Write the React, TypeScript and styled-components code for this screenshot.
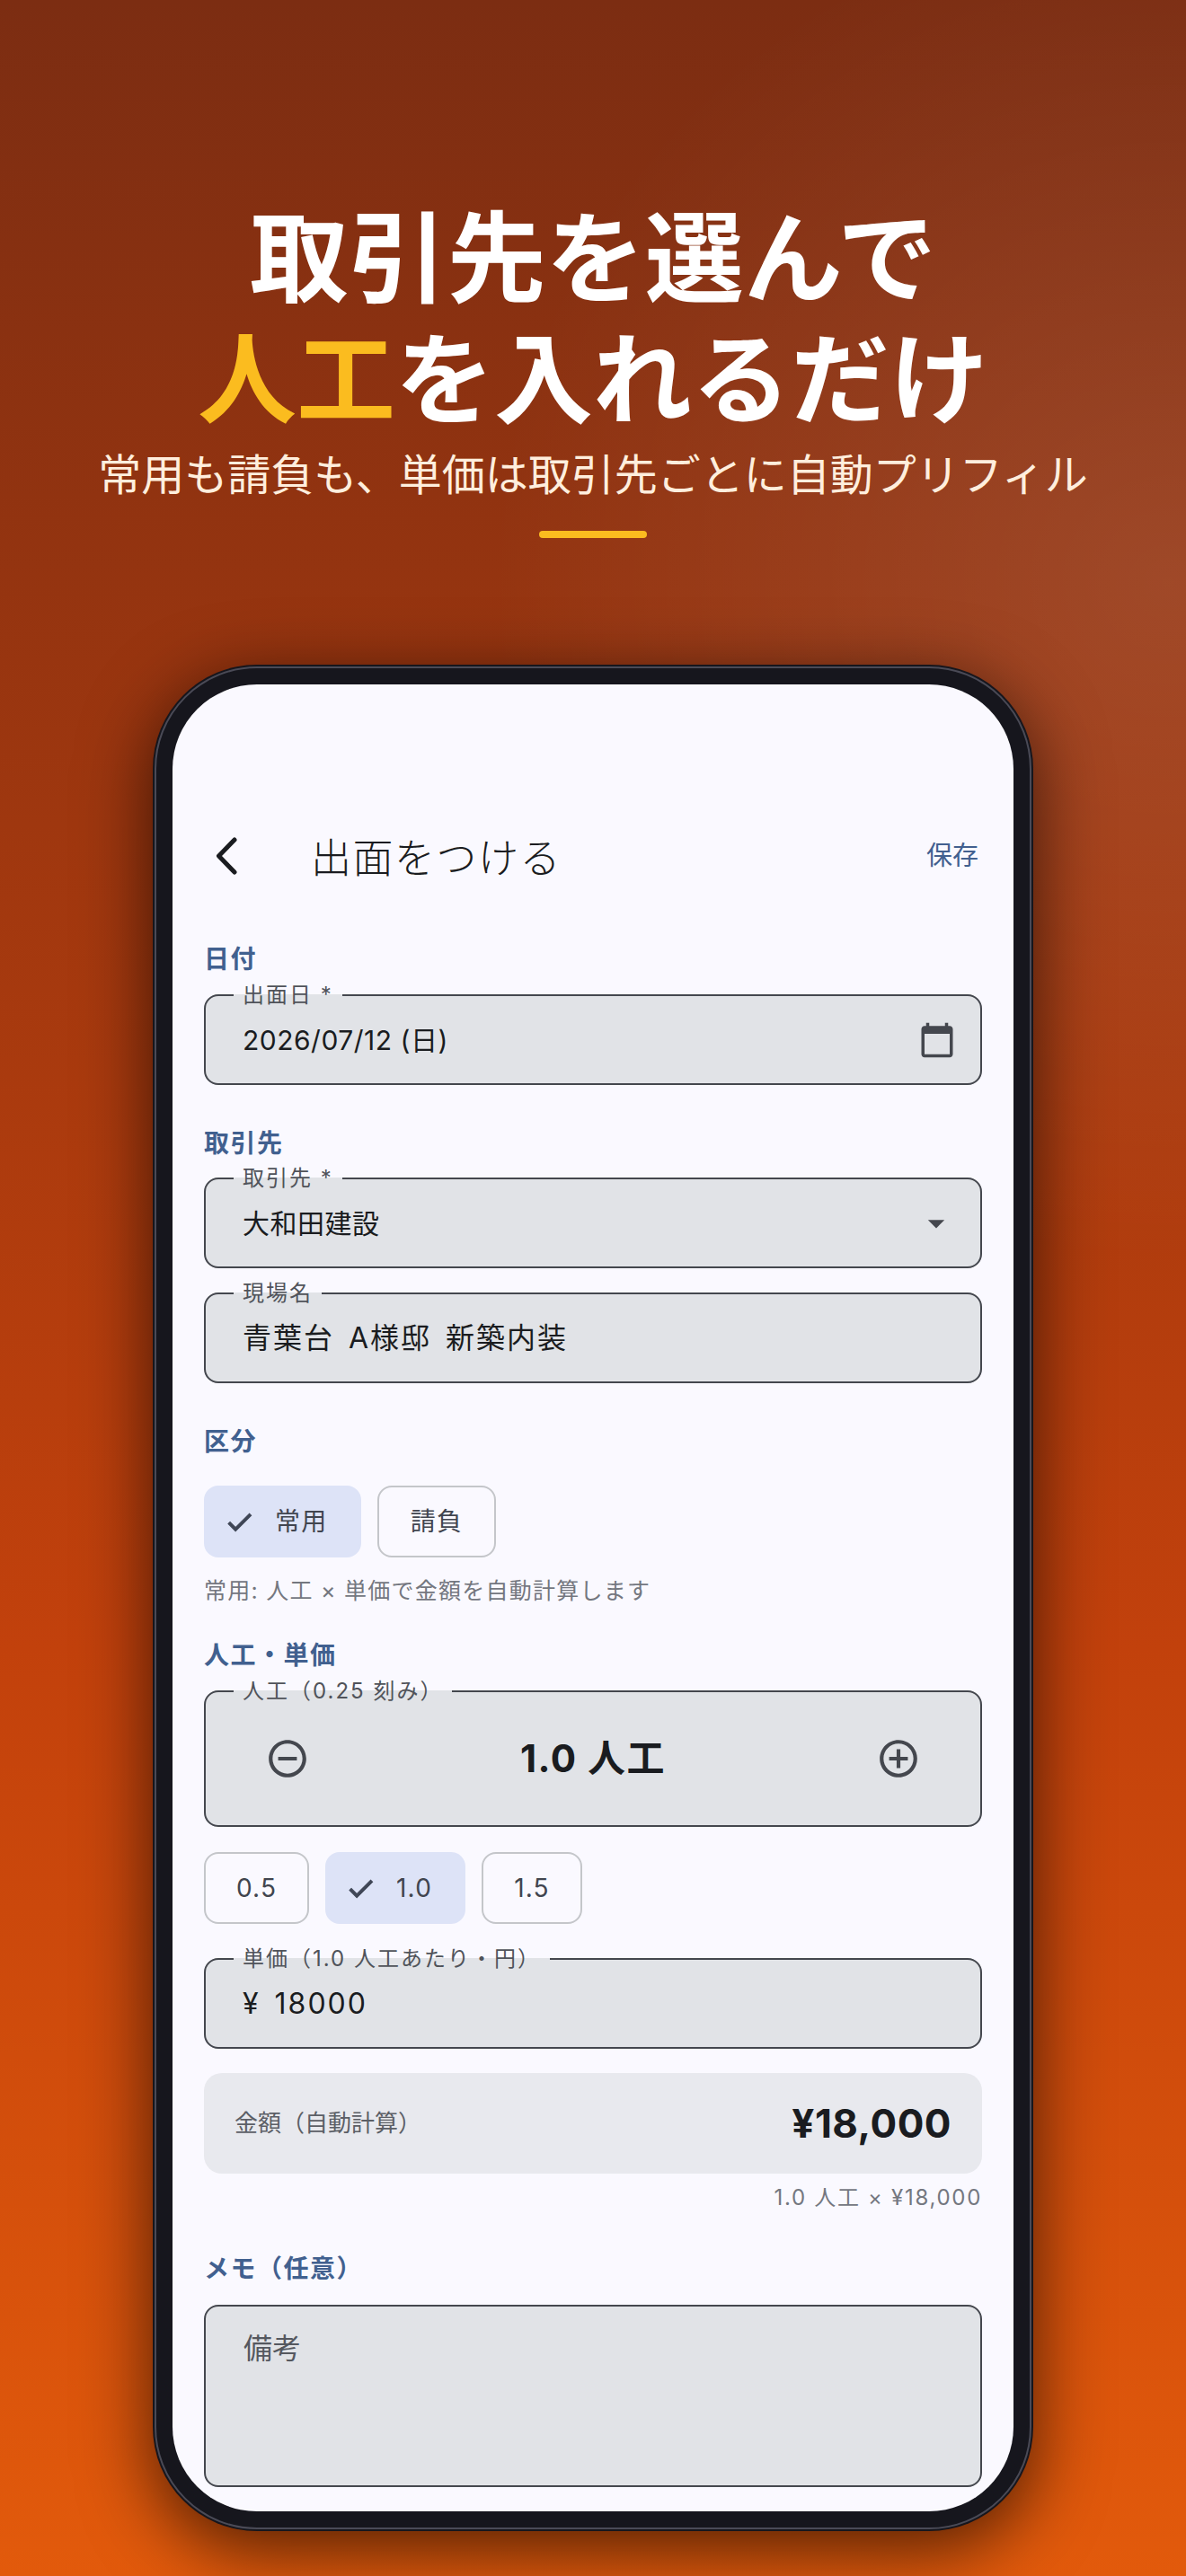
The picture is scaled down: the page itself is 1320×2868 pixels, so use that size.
import React from "react";
import styled, { createGlobalStyle } from "styled-components";

const GlobalStyle = createGlobalStyle`
  html, body {
    margin: 0;
    padding: 0;
  }
  body {
    font-family: Inter, "Noto Sans CJK JP", sans-serif;
  }
  * {
    box-sizing: border-box;
  }
`;

const Page = styled.div`
  width: 1320px;
  height: 2868px;
  overflow: hidden;
  padding-top: 213px;
  background:
    radial-gradient(circle 760px at 1300px 650px, rgba(255, 255, 255, 0.1), rgba(255, 255, 255, 0) 100%),
    linear-gradient(180deg, #7c2d12 0%, #c2410c 64%, #e25a0c 100%);
`;

const Headline = styled.h1`
  margin: 0;
  text-align: center;
  font-family: "Noto Sans CJK JP", sans-serif;
  font-size: 110px;
  line-height: 135px;
  font-weight: 700;
  color: #ffffff;
`;

const Accent = styled.span`
  color: #fbbc1f;
`;

const Sub = styled.div`
  margin-top: 10px;
  text-align: center;
  font-family: "Noto Sans CJK JP", sans-serif;
  font-size: 48px;
  line-height: 64px;
  font-weight: 400;
  color: #ffeedd;
`;

const Bar = styled.div`
  width: 120px;
  height: 8px;
  margin: 34px auto 0;
  border-radius: 4px;
  background: #fbbc1f;
`;

const Phone = styled.div`
  width: 980px;
  height: 2078px;
  margin: 141px auto 0;
  padding: 2px;
  border-radius: 116px;
  background: #16161d;
  box-shadow: 0 20px 80px rgba(0, 0, 0, 0.65);
`;

const Ring = styled.div`
  height: 100%;
  padding: 18px;
  border: 2px solid #4a4a56;
  border-radius: 114px;
`;

const Screen = styled.div`
  height: 100%;
  overflow: hidden;
  padding-top: 135px;
  border-radius: 94px;
  background: #faf9ff;
`;

const AppBar = styled.div`
  display: flex;
  align-items: center;
  height: 112px;
  padding: 0 39px 0 48px;
`;

const Back = styled.svg`
  width: 24px;
  height: 42px;
  flex: none;
`;

const Title = styled.div`
  flex: 1;
  margin-left: 82px;
  font-family: "Noto Sans CJK JP", sans-serif;
  font-size: 45px;
  line-height: 60px;
  font-weight: 300;
  letter-spacing: 1.5px;
  color: #1a1c20;
`;

const Save = styled.div`
  font-size: 29px;
  line-height: 40px;
  color: #42608f;
`;

const Form = styled.div`
  padding: 42px 35px 0;
`;

const SectionLabel = styled.div<{ $mt?: number }>`
  margin-top: ${(p) => p.$mt ?? 0}px;
  height: 34px;
  font-size: 28px;
  line-height: 34px;
  font-weight: 700;
  letter-spacing: 1.5px;
  color: #41608f;
`;

const Field = styled.fieldset<{ $mt: number }>`
  margin: ${(p) => p.$mt}px 0 0;
  padding: 0;
  min-width: 0;
  border: 2px solid #44474e;
  border-radius: 16px;
  background: #e1e3e7;
`;

const Legend = styled.legend`
  margin-left: 31px;
  padding: 0 10px;
  font-size: 24px;
  line-height: 24px;
  letter-spacing: 2px;
  color: #50535a;
`;

const FieldBody = styled.div<{ $h?: number }>`
  display: flex;
  align-items: center;
  justify-content: space-between;
  height: ${(p) => p.$h ?? 86}px;
  padding: 0 27px 11px 41px;
`;

const Value = styled.div<{ $big?: boolean }>`
  font-size: ${(p) => (p.$big ? 32 : 30)}px;
  line-height: 40px;
  letter-spacing: ${(p) => (p.$big ? 2 : 0.5)}px;
  word-spacing: ${(p) => (p.$big ? 5 : 0)}px;
  color: #1a1c20;
`;

const StepBody = styled(FieldBody)`
  padding: 0 66px 11px 66px;
`;

const StepValue = styled.div`
  font-size: 42px;
  line-height: 50px;
  font-weight: 700;
  letter-spacing: 1.5px;
  color: #1a1c20;
`;

const FieldIcon = styled.svg<{ $size: number }>`
  width: ${(p) => p.$size}px;
  height: ${(p) => p.$size}px;
  flex: none;
  fill: #44474e;
`;

const ChipRow = styled.div<{ $mt: number }>`
  display: flex;
  gap: 18px;
  margin-top: ${(p) => p.$mt}px;
`;

const Chip = styled.div<{ $on?: boolean; $w: number }>`
  display: flex;
  align-items: center;
  justify-content: ${(p) => (p.$on ? "flex-start" : "center")};
  gap: 22px;
  width: ${(p) => p.$w}px;
  height: 80px;
  padding-left: ${(p) => (p.$on ? 20 : 0)}px;
  border-radius: 16px;
  border: 2px solid ${(p) => (p.$on ? "#dde3f7" : "#c4c6ca")};
  background: ${(p) => (p.$on ? "#dde3f7" : "transparent")};
  font-size: 28px;
  line-height: 36px;
  letter-spacing: 1.2px;
  color: #41454f;
`;

const CheckIcon = styled.svg`
  width: 35px;
  height: 35px;
  flex: none;
  fill: #3f4656;
  stroke: #3f4656;
  stroke-width: 0.7;
`;

const Helper = styled.div`
  margin-top: 20px;
  font-size: 25px;
  line-height: 34px;
  letter-spacing: 1.25px;
  color: #74777f;
`;

const Summary = styled.div`
  display: flex;
  align-items: center;
  justify-content: space-between;
  height: 112px;
  margin-top: 27px;
  padding: 0 34px 0 34px;
  border-radius: 20px;
  background: #e8e9ee;
`;

const SummaryLabel = styled.div`
  font-size: 26px;
  line-height: 34px;
  color: #5c5f66;
`;

const SummaryValue = styled.div`
  font-size: 44px;
  line-height: 54px;
  font-weight: 700;
  letter-spacing: 0.5px;
  color: #1a1c20;
`;

const Calc = styled.div`
  margin-top: 10px;
  text-align: right;
  font-size: 24px;
  line-height: 34px;
  letter-spacing: 1.7px;
  color: #74777f;
`;

const Memo = styled.div`
  height: 203px;
  margin-top: 23px;
  padding: 27px 42px;
  border: 2px solid #44474e;
  border-radius: 16px;
  background: #e1e3e7;
  font-size: 32px;
  line-height: 40px;
  color: #55585f;
`;

const Check = () => (
  <CheckIcon viewBox="0 0 24 24">
    <path d="M9 16.17L4.83 12l-1.42 1.41L9 19 21 7l-1.41-1.41z" />
  </CheckIcon>
);

export default function App() {
  return (
    <Page>
      <GlobalStyle />
      <Headline>
        取引先を選んで
        <br />
        <Accent>人工</Accent>を入れるだけ
      </Headline>
      <Sub>常用も請負も、単価は取引先ごとに自動プリフィル</Sub>
      <Bar />
      <Phone>
        <Ring>
          <Screen>
            <AppBar>
              <Back viewBox="0 0 24 42">
                <path d="M21 3 L3.5 21 L21 39" fill="none" stroke="#1a1c20" strokeWidth="5" strokeLinecap="round" strokeLinejoin="round" />
              </Back>
              <Title>出面をつける</Title>
              <Save>保存</Save>
            </AppBar>
            <Form>
              <SectionLabel>日付</SectionLabel>
              <Field $mt={11}>
                <Legend>出面日 *</Legend>
                <FieldBody>
                  <Value>2026/07/12 (日)</Value>
                  <FieldIcon $size={42} viewBox="0 0 24 24">
                    <path d="M20 3h-1V1h-2v2H7V1H5v2H4c-1.1 0-2 .9-2 2v16c0 1.1.9 2 2 2h16c1.1 0 2-.9 2-2V5c0-1.1-.9-2-2-2zm0 18H4V8h16v13z" />
                  </FieldIcon>
                </FieldBody>
              </Field>

              <SectionLabel $mt={48}>取引先</SectionLabel>
              <Field $mt={10}>
                <Legend>取引先 *</Legend>
                <FieldBody>
                  <Value>大和田建設</Value>
                  <FieldIcon $size={44} viewBox="0 0 24 24">
                    <path d="M7 10l5 5 5-5z" />
                  </FieldIcon>
                </FieldBody>
              </Field>
              <Field $mt={16}>
                <Legend>現場名</Legend>
                <FieldBody>
                  <Value $big>青葉台 A様邸 新築内装</Value>
                </FieldBody>
              </Field>

              <SectionLabel $mt={48}>区分</SectionLabel>
              <ChipRow $mt={32}>
                <Chip $on $w={175}>
                  <Check />
                  常用
                </Chip>
                <Chip $w={132}>請負</Chip>
              </ChipRow>
              <Helper>常用: 人工 × 単価で金額を自動計算します</Helper>

              <SectionLabel $mt={38}>人工・単価</SectionLabel>
              <Field $mt={11}>
                <Legend>人工（0.25 刻み）</Legend>
                <StepBody $h={137}>
                  <FieldIcon $size={50} viewBox="0 0 24 24">
                    <path d="M7 11v2h10v-2H7zm5-9C6.48 2 2 6.48 2 12s4.48 10 10 10 10-4.48 10-10S17.52 2 12 2zm0 18c-4.41 0-8-3.59-8-8s3.59-8 8-8 8 3.59 8 8-3.59 8-8 8z" />
                  </FieldIcon>
                  <StepValue>1.0 人工</StepValue>
                  <FieldIcon $size={50} viewBox="0 0 24 24">
                    <path d="M13 7h-2v4H7v2h4v4h2v-4h4v-2h-4V7zm-1-5C6.48 2 2 6.48 2 12s4.48 10 10 10 10-4.48 10-10S17.52 2 12 2zm0 18c-4.41 0-8-3.59-8-8s3.59-8 8-8 8 3.59 8 8-3.59 8-8 8z" />
                  </FieldIcon>
                </StepBody>
              </Field>
              <ChipRow $mt={28}>
                <Chip $w={117}>0.5</Chip>
                <Chip $on $w={156}>
                  <Check />
                  1.0
                </Chip>
                <Chip $w={112}>1.5</Chip>
              </ChipRow>
              <Field $mt={27}>
                <Legend>単価（1.0 人工あたり・円）</Legend>
                <FieldBody>
                  <Value $big>¥ 18000</Value>
                </FieldBody>
              </Field>

              <Summary>
                <SummaryLabel>金額（自動計算）</SummaryLabel>
                <SummaryValue>¥18,000</SummaryValue>
              </Summary>
              <Calc>1.0 人工 × ¥18,000</Calc>

              <SectionLabel $mt={45}>メモ（任意）</SectionLabel>
              <Memo>備考</Memo>
            </Form>
          </Screen>
        </Ring>
      </Phone>
    </Page>
  );
}
